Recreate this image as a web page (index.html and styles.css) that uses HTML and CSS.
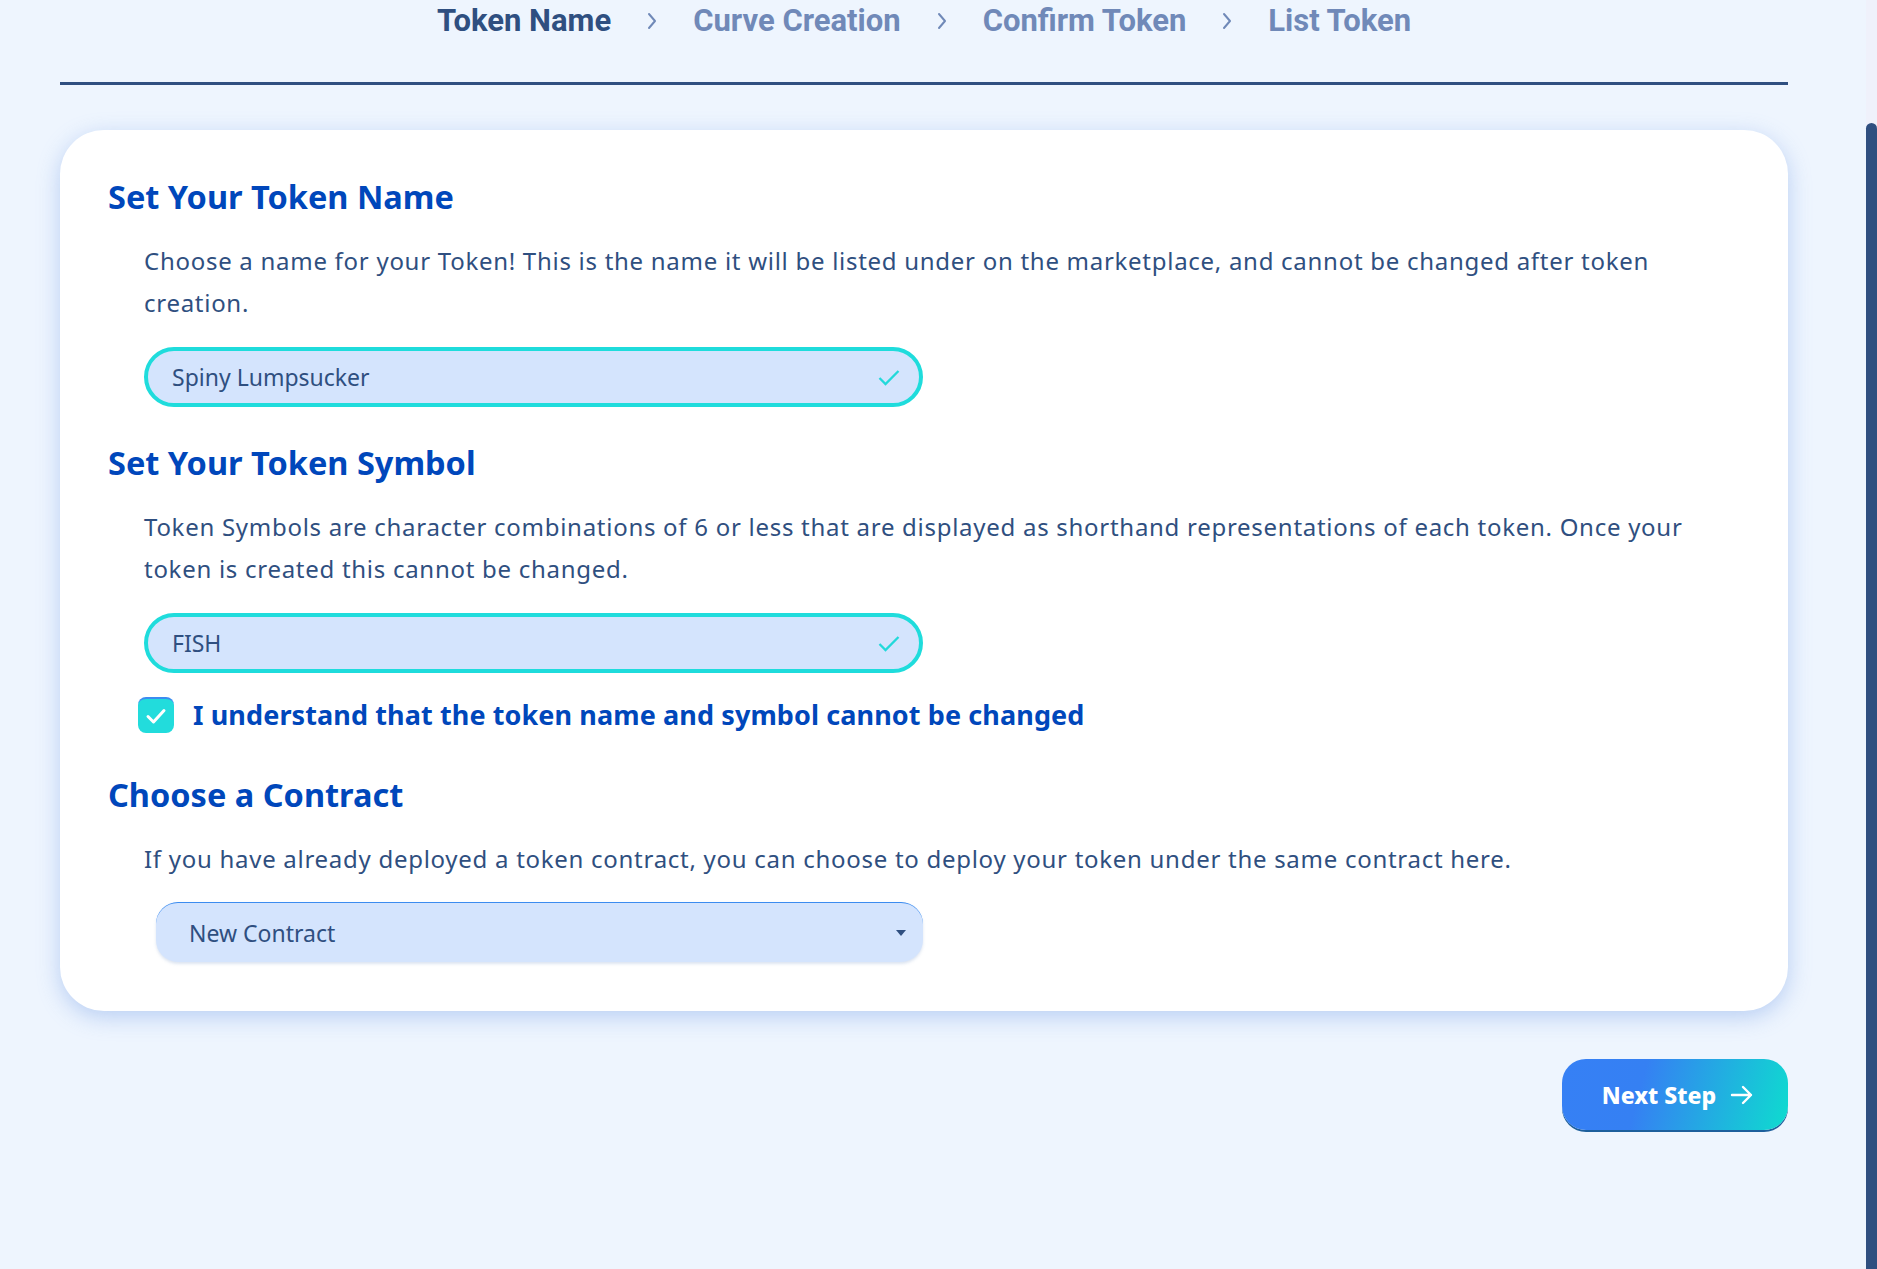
FILE: index.html
```html
<!DOCTYPE html>
<html lang="en">
<head>
<meta charset="utf-8">
<title>Create Token</title>
<link rel="stylesheet" href="styles.css">
</head>
<body>
<main class="page">
  <nav class="steps">
    <span class="step active">Token Name</span>
    <svg class="chev" width="10" height="18" viewBox="0 0 10 18"><polyline points="2,2 8,9 2,16" fill="none" stroke="#7089b8" stroke-width="2" stroke-linecap="round" stroke-linejoin="round"/></svg>
    <span class="step">Curve Creation</span>
    <svg class="chev" width="10" height="18" viewBox="0 0 10 18"><polyline points="2,2 8,9 2,16" fill="none" stroke="#7089b8" stroke-width="2" stroke-linecap="round" stroke-linejoin="round"/></svg>
    <span class="step">Confirm Token</span>
    <svg class="chev" width="10" height="18" viewBox="0 0 10 18"><polyline points="2,2 8,9 2,16" fill="none" stroke="#7089b8" stroke-width="2" stroke-linecap="round" stroke-linejoin="round"/></svg>
    <span class="step">List Token</span>
  </nav>
  <div class="divider"></div>
  <section class="card">
    <h2 class="title">Set Your Token Name</h2>
    <p class="desc">Choose a name for your Token! This is the name it will be listed under on the marketplace, and cannot be changed after token creation.</p>
    <div class="field valid">
      <span class="value">Spiny Lumpsucker</span>
      <svg class="ok" width="22" height="17" viewBox="0 0 22 17"><polyline points="1.5,9 7.5,15 20.5,2" fill="none" stroke="#22d9da" stroke-width="2.3"/></svg>
    </div>
    <h2 class="title t2">Set Your Token Symbol</h2>
    <p class="desc">Token Symbols are character combinations of 6 or less that are displayed as shorthand representations of each token. Once your token is created this cannot be changed.</p>
    <div class="field valid">
      <span class="value">FISH</span>
      <svg class="ok" width="22" height="17" viewBox="0 0 22 17"><polyline points="1.5,9 7.5,15 20.5,2" fill="none" stroke="#22d9da" stroke-width="2.3"/></svg>
    </div>
    <label class="agree">
      <span class="box"><svg width="22" height="18" viewBox="0 0 22 18"><polyline points="3,9.5 8.5,15 19,3.5" fill="none" stroke="#fff" stroke-width="3" stroke-linecap="round" stroke-linejoin="round"/></svg></span>
      <span class="agree-text">I understand that the token name and symbol cannot be changed</span>
    </label>
    <h2 class="title t3">Choose a Contract</h2>
    <p class="desc">If you have already deployed a token contract, you can choose to deploy your token under the same contract here.</p>
    <div class="select">
      <span class="value">New Contract</span>
      <span class="caret"></span>
    </div>
  </section>
  <div class="actions">
    <button class="next">Next Step
      <svg width="24" height="22" viewBox="0 0 24 22"><path d="M2 11 H21 M13 3 L21 11 L13 19" fill="none" stroke="#fff" stroke-width="2.4" stroke-linecap="round" stroke-linejoin="round"/></svg>
    </button>
  </div>
</main>
<aside class="scrollbar"><div class="thumb"></div></aside>
</body>
</html>
```
FILE: styles.css
```css
* { box-sizing: border-box; }
html, body { height: 100%; }
body {
  margin: 0;
  display: flex;
  overflow: hidden;
  background: #eef5fe;
  font-family: "Noto Sans", "Open Sans", sans-serif;
  color: #2f4f80;
}
.page {
  flex: 1;
  padding: 0 78px 0 60px;
}
.steps {
  height: 41px;
  display: flex;
  justify-content: center;
  align-items: center;
  gap: 36px;
  font-family: "Roboto", sans-serif;
  font-weight: 700;
  font-size: 31px;
  color: #7089b8;
}
.step.active { color: #2f4f80; }
.chev { display: block; }
.divider {
  margin-top: 41px;
  height: 3px;
  background: #2f4f80;
}
.card {
  margin-top: 45px;
  background: #fff;
  border-radius: 44px;
  padding: 47px 48px 49px;
  box-shadow: 0 6px 22px rgba(120, 160, 230, 0.45);
}
.title {
  margin: 0;
  font-size: 32.5px;
  line-height: 40px;
  font-weight: 700;
  color: #0047bb;
}
.t2 { margin-top: 36px; }
.t3 { margin-top: 42px; }
.desc {
  margin: 23px 0 0 36px;
  font-size: 24px;
  letter-spacing: 0.72px;
  line-height: 42px;
  color: #2f4f80;
}
.field {
  margin: 23px 0 0 36px;
  width: 779px;
  height: 60px;
  border: 4px solid #1fdcdc;
  border-radius: 30px;
  background: #d4e4fd;
  display: flex;
  align-items: center;
  justify-content: space-between;
  padding: 0 19px 0 24px;
  font-size: 23px;
}
.value { color: #2f4f80; }
.agree {
  margin: 23px 0 0 30px;
  display: flex;
  align-items: center;
  gap: 19px;
}
.box {
  width: 36px;
  height: 36px;
  border-radius: 8px;
  background: #22dcdc;
  border-top: 2px solid #3b8cf0;
  display: flex;
  align-items: center;
  justify-content: center;
}
.agree-text {
  font-size: 27px;
  letter-spacing: 0.1px;
  font-weight: 700;
  color: #0047bb;
}
.select {
  margin: 22px 0 0 48px;
  width: 767px;
  height: 60px;
  border-radius: 22px;
  background: #d4e4fd;
  border-top: 1.5px solid #3b8cf0;
  box-shadow: 0 2px 3px rgba(120, 150, 200, 0.25);
  display: flex;
  align-items: center;
  justify-content: space-between;
  padding: 0 17px 0 33px;
  font-size: 23px;
}
.caret {
  width: 0;
  height: 0;
  border-left: 5px solid transparent;
  border-right: 5px solid transparent;
  border-top: 6px solid #2f4f80;
}
.actions {
  margin-top: 48px;
  display: flex;
  justify-content: flex-end;
}
.next {
  width: 226px;
  height: 71px;
  border: none;
  border-radius: 24px;
  background: linear-gradient(105deg, #3680f5 0%, #3580f3 35%, #0edccf 100%);
  box-shadow: 0 2px 0 #1d5f9c;
  color: #fff;
  font-family: "Noto Sans", sans-serif;
  font-weight: 800;
  font-size: 23px;
  display: flex;
  align-items: center;
  justify-content: center;
  gap: 14px;
  padding: 0 0 0 6px;
}
.scrollbar {
  width: 11px;
  background: #eff1fb;
  display: flex;
  flex-direction: column;
}
.thumb {
  margin-top: 123px;
  flex: 1;
  background: #2f4f80;
  border-radius: 6px 6px 0 0;
}
```
